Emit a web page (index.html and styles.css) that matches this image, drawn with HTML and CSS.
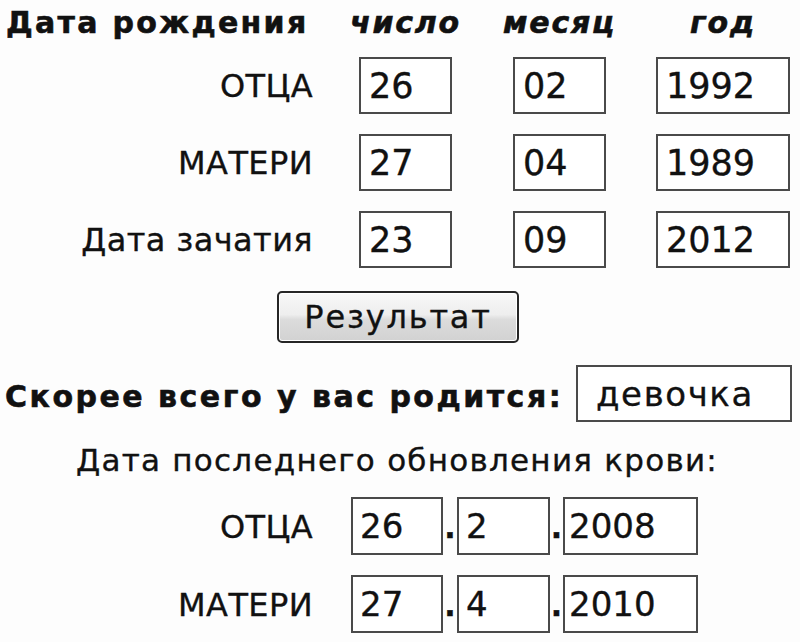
FILE: index.html
```html
<!DOCTYPE html>
<html lang="ru">
<head>
<meta charset="utf-8">
<title>Дата рождения</title>
<link rel="stylesheet" href="styles.css">
</head>
<body>
<div class="page">
  <div class="row head">
    <div class="lbl title">Дата рождения</div>
    <div class="c1 hd">число</div>
    <div class="c2 hd">месяц</div>
    <div class="c3 hd">год</div>
  </div>
  <div class="row">
    <div class="lbl">ОТЦА</div>
    <input class="box c1" type="text" value="26">
    <input class="box c2" type="text" value="02">
    <input class="box c3" type="text" value="1992">
  </div>
  <div class="row">
    <div class="lbl">МАТЕРИ</div>
    <input class="box c1" type="text" value="27">
    <input class="box c2" type="text" value="04">
    <input class="box c3" type="text" value="1989">
  </div>
  <div class="row">
    <div class="lbl">Дата зачатия</div>
    <input class="box c1" type="text" value="23">
    <input class="box c2" type="text" value="09">
    <input class="box c3" type="text" value="2012">
  </div>
  <div class="btnrow">
    <button class="btn" type="button">Результат</button>
  </div>
  <div class="result">
    <span class="restext">Скорее всего у вас родится:</span>
    <input class="box resbox" type="text" value="девочка">
  </div>
  <div class="sub">Дата последнего обновления крови:</div>
  <div class="brow">
    <div class="lbl">ОТЦА</div>
    <input class="box b1" type="text" value="26">
    <span class="dot">.</span>
    <input class="box b2" type="text" value="2">
    <span class="dot dot2">.</span>
    <input class="box b3" type="text" value="2008">
  </div>
  <div class="brow">
    <div class="lbl">МАТЕРИ</div>
    <input class="box b1" type="text" value="27">
    <span class="dot">.</span>
    <input class="box b2" type="text" value="4">
    <span class="dot dot2">.</span>
    <input class="box b3" type="text" value="2010">
  </div>
</div>
</body>
</html>
```
FILE: styles.css
```css
html, body {
  margin: 0;
  padding: 0;
  background: #fdfdfd;
}
body {
  font-family: "DejaVu Sans", Verdana, sans-serif;
  color: #111;
  width: 800px;
  height: 642px;
  overflow: hidden;
  -webkit-text-stroke: 0.35px #111;
}
.page {
  padding-top: 4px;
}
.row {
  display: flex;
  align-items: center;
  height: 57px;
  margin-bottom: 20px;
}
.row.head {
  height: 37px;
  margin-bottom: 16px;
  line-height: 37px;
}
.lbl {
  width: 313px;
  flex: none;
  text-align: right;
  font-size: 32px;
  letter-spacing: 0.4px;
  white-space: nowrap;
}
.title {
  text-align: left;
  padding-left: 6px;
  box-sizing: border-box;
  font-weight: bold;
  font-size: 30px;
  letter-spacing: 2.3px;
  -webkit-text-stroke: 0.6px #111;
}
.hd {
  display: flex;
  justify-content: center;
  font-weight: bold;
  font-style: italic;
  font-size: 30px;
  letter-spacing: 1.8px;
  white-space: nowrap;
  -webkit-text-stroke: 0.6px #111;
}
.c1 { margin-left: 46px; width: 93px; flex: none; }
.c2 { margin-left: 61px; width: 93px; flex: none; }
.c3 { margin-left: 50px; width: 134px; flex: none; }
.box {
  box-sizing: border-box;
  height: 57px;
  border: 2px solid #4a4a4a;
  border-radius: 0;
  background: #fff;
  font-family: "DejaVu Sans", Verdana, sans-serif;
  font-size: 35px;
  color: #111;
  -webkit-text-stroke: 0.35px #111;
  padding: 0 0 0 8px;
  margin-top: 0;
  margin-bottom: 0;
  outline: none;
}
.btnrow {
  display: flex;
  justify-content: center;
  padding-top: 3px;
  padding-right: 4px;
}
.btn {
  width: 242px;
  height: 52px;
  box-sizing: border-box;
  border: 2px solid #262626;
  border-radius: 5px;
  background: linear-gradient(#f8f8f8 0%, #eeeeee 45%, #dcdcdc 55%, #d2d2d2 100%);
  box-shadow: inset 0 0 0 1px #ffffff;
  font-family: "DejaVu Sans", Verdana, sans-serif;
  font-size: 32px;
  letter-spacing: 1.8px;
  color: #111;
  -webkit-text-stroke: 0.35px #111;
  padding: 0;
  line-height: 46px;
}
.result {
  display: flex;
  align-items: center;
  justify-content: space-between;
  margin-top: 22px;
  padding: 0 8px 0 5px;
}
.restext {
  font-weight: bold;
  font-size: 30px;
  letter-spacing: 2.5px;
  white-space: nowrap;
  padding-top: 6px;
  -webkit-text-stroke: 0.6px #111;
}
.resbox {
  width: 216px;
  font-size: 34px;
  letter-spacing: 1.6px;
  padding-left: 18px;
}
.sub {
  text-align: center;
  font-size: 31px;
  letter-spacing: 1.25px;
  line-height: 36px;
  margin-top: 20px;
  padding-right: 6px;
  white-space: nowrap;
}
.brow {
  display: flex;
  align-items: baseline;
  margin-top: 19px;
}
.brow + .brow {
  margin-top: 20px;
}
.brow .box {
  height: 58px;
  font-size: 34px;
  padding-left: 7px;
}
.b1 { margin-left: 38px; width: 92px; flex: none; }
.b2 { width: 93px; flex: none; }
.brow .b3 { width: 135px; flex: none; padding-left: 4px; }
.dot {
  width: 14px;
  flex: none;
  text-align: center;
  font-size: 30px;
  font-weight: bold;
}
.dot2 { width: 13px; }
```
